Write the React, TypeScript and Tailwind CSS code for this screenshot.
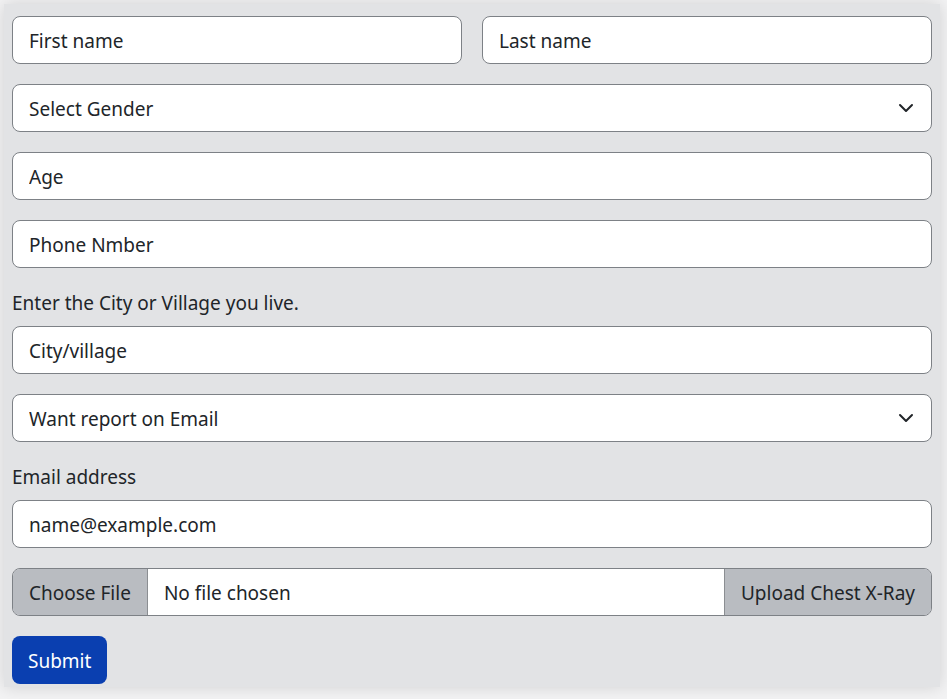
import { ChangeEvent, useState } from 'react';

const inputCls =
  'h-12 w-full rounded-lg border border-[#7d8186] bg-white px-4 pt-[2px] text-[19px] text-[#212529] outline-none placeholder:text-[#212529]';

const Chevron = () => (
  <svg
    className="pointer-events-none absolute right-[18px] top-1/2 h-4 w-4 -translate-y-1/2"
    viewBox="0 0 16 16"
    fill="none"
    stroke="#212529"
    strokeWidth="2"
    strokeLinecap="round"
    strokeLinejoin="round"
  >
    <path d="m2 5 6 6 6-6" />
  </svg>
);

const SelectBox = ({ label, options }: { label: string; options: string[] }) => (
  <div className="relative">
    <select defaultValue="" className={`${inputCls} appearance-none pr-12`}>
      <option value="" disabled>
        {label}
      </option>
      {options.map((o) => (
        <option key={o} value={o}>
          {o}
        </option>
      ))}
    </select>
    <Chevron />
  </div>
);

const App = () => {
  const [fileName, setFileName] = useState('No file chosen');

  const onFile = (e: ChangeEvent<HTMLInputElement>) => {
    const f = e.target.files?.[0];
    setFileName(f ? f.name : 'No file chosen');
  };

  return (
    <div
      className="min-h-[699px] bg-[#f3f3f4] p-1"
      style={{ fontFamily: '"Noto Sans", "Open Sans", sans-serif' }}
    >
      <div className="w-[936px] bg-[#e2e3e5] px-2 pb-[3px] pt-3 shadow-[0_0_16px_rgba(0,0,0,0.14)]">
        <form className="flex flex-col gap-5" onSubmit={(e) => e.preventDefault()}>
          <div className="grid grid-cols-2 gap-5">
            <input className={inputCls} placeholder="First name" />
            <input className={inputCls} placeholder="Last name" />
          </div>

          <SelectBox label="Select Gender" options={['Male', 'Female', 'Other']} />

          <input className={inputCls} placeholder="Age" />
          <input className={inputCls} placeholder="Phone Nmber" />

          <div className="flex flex-col gap-2">
            <label className="text-[19px] leading-[30px] text-[#212529]">
              Enter the City or Village you live.
            </label>
            <input className={inputCls} placeholder="City/village" />
          </div>

          <SelectBox label="Want report on Email" options={['Yes', 'No']} />

          <div className="flex flex-col gap-2">
            <label className="text-[19px] leading-[30px] text-[#212529]">
              Email address
            </label>
            <input className={inputCls} placeholder="name@example.com" />
          </div>

          <label className="flex h-12 cursor-pointer overflow-hidden rounded-lg border border-[#7d8186] text-[19px] text-[#212529]">
            <span className="flex items-center border-r border-[#8b8e92] bg-[#b9bcc1] px-4 pt-[3px]">
              Choose File
            </span>
            <span className="flex flex-1 items-center bg-white px-4 pt-[3px]">{fileName}</span>
            <span className="flex items-center border-l border-[#8b8e92] bg-[#b9bcc1] px-4 pt-[3px]">
              Upload Chest X-Ray
            </span>
            <input type="file" className="hidden" onChange={onFile} />
          </label>

          <div>
            <button
              type="submit"
              className="h-12 rounded-lg bg-[#0a3fb0] px-4 pt-[2px] text-[19px] text-white"
            >
              Submit
            </button>
          </div>
        </form>
      </div>
    </div>
  );
};

export default App;
